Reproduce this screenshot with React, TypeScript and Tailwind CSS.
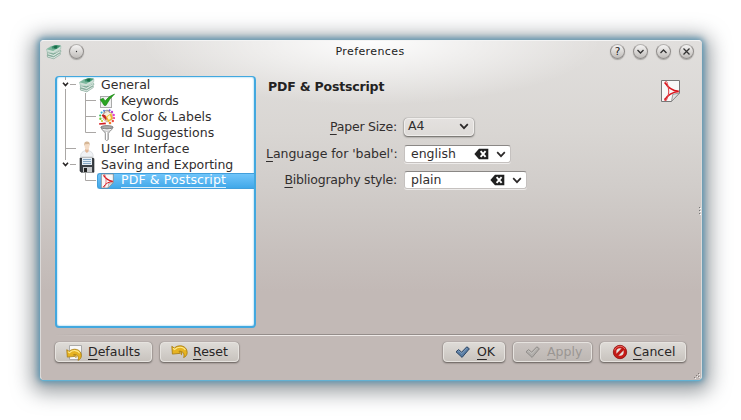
import React from "react";

const svgBase = "block shrink-0";

function BooksIcon() {
  return (
    <svg className={svgBase} width="16" height="16" viewBox="0 0 16 16">
      <path d="M1 10.8 L7 8.5 L14.6 9.6 L8 14.8 L1.5 13.2z" fill="#86ab9b" />
      <path d="M1.2 11.3 L7.5 13 L14.2 9 L14.3 10.6 L7.8 14.8 L1.5 13z" fill="#e3ebe7" stroke="#7da593" strokeWidth=".6" />
      <path d="M1.3 8.6 L7.4 10.4 L14.7 6.4 L14.8 8 L7.8 12.4 L1.5 10.6z" fill="#e3ece7" stroke="#6f9f8a" strokeWidth=".6" />
      <path d="M.5 5.2 L5 2.4 L15 2.2 L14.6 5.2 L7.4 9.6 L1 7.8z" fill="#cfe0d7" stroke="#7fae99" strokeWidth=".4" />
      <path d="M.5 5.2 L5 2.4 L15 2.2 L7.2 7z" fill="#7db89e" />
      <path d="M5.6 2.6 L9 1 L14.9 1.6 L10.5 5 L6 4.6z" fill="#3f9470" />
      <path d="M7.2 2.6 L11.4 1.4 L10.6 4.4 L8.7 4.6z" fill="#1a6c4a" />
    </svg>
  );
}

function KeywordsIcon() {
  return (
    <svg className={svgBase} width="16" height="16" viewBox="0 0 16 16">
      <rect x="1.5" y="3.5" width="11" height="11" fill="#f0f0f0" stroke="#aaaaaa" />
      <path d="M1.2 6.6 L4.2 5.2 L6.2 8 Q9.5 3 15.6 1 Q10.5 5.5 7 12.4 L5.2 12.4z" fill="#2ba322" stroke="#178711" strokeWidth=".6" />
    </svg>
  );
}

function ColorIcon() {
  return (
    <svg className={svgBase} width="16" height="16" viewBox="0 0 16 16">
      <g>
        <circle cx="5" cy="1.8" r="1" fill="#4f7de8" />
        <circle cx="10.6" cy="1.2" r="1" fill="#7a4fe0" />
        <circle cx="13" cy="3" r="1.2" fill="#b93ddb" />
        <circle cx="14.7" cy="6" r="1.2" fill="#e83ad4" />
        <circle cx="15" cy="9" r="1.1" fill="#ee3d8e" />
        <circle cx="13.8" cy="12" r="1.2" fill="#ef4b3c" />
        <circle cx="11" cy="14" r="1.3" fill="#ef7b2c" />
        <circle cx="2.6" cy="3.6" r="1.1" fill="#32b6d4" />
        <circle cx="1.2" cy="6.5" r="1.1" fill="#38ba5d" />
        <circle cx="1.4" cy="9.7" r="1.2" fill="#6ccd32" />
        <circle cx="3" cy="12" r="1.1" fill="#c6cf28" />
      </g>
      <path d="M4.4 4.6 L8.5 2.2 L13 4.2 L13.5 10 L8 13 L4 10z" fill="#f5efe1" stroke="#a46b55" strokeWidth=".5" />
      <path d="M5 4.5 C5 .6 10 .2 10.8 3.6" fill="none" stroke="#777" strokeWidth="1" />
      <path d="M6.6 8 L12.2 4.2 L13.8 9.4 L9.2 13.2z" fill="#efb92b" />
      <path d="M3.6 5.2 L6.4 6.2 L7.6 9.4 L7.4 11.8 L5 9 L2.8 6.8z" fill="#c62720" />
      <path d="M8.2 8 L10.8 6 L12 9.2 L9.8 11z" fill="#fff4d0" />
      <path d="M0 14.3 L6.6 13.6 L7 15.2 L.3 15.7z" fill="#d52124" />
    </svg>
  );
}

function FunnelIcon() {
  return (
    <svg className={svgBase} width="16" height="16" viewBox="0 0 16 16">
      <path d="M2 2.2 C2.6 5.4 6 6.6 6.3 8.5 V14.6 Q7.8 16.2 9.3 14.6 V8.5 C9.8 6.6 13.2 5.4 13.8 2.2z" fill="#cdcdcd" stroke="#808080" strokeWidth=".8" />
      <path d="M7.6 7 V15" stroke="#fff" strokeWidth="1.2" />
      <ellipse cx="8" cy="2.2" rx="6.1" ry="1.6" fill="#a9a9a9" stroke="#737373" strokeWidth=".8" />
      <path d="M4 4.4 Q8 6 12 4.4" stroke="#f5f5f5" strokeWidth="1" fill="none" />
    </svg>
  );
}

function UserIcon() {
  return (
    <svg className={svgBase} width="16" height="16" viewBox="0 0 16 16">
      <path d="M1.6 15.6 C1.6 11.6 4 10.4 6 9.6 H9.6 C12 10.4 14.2 11.6 14.2 15.6z" fill="#f0f2f5" stroke="#d0d4d8" strokeWidth=".7" />
      <path d="M6.2 8 H9.6 V10.4 L7.9 12 L6.2 10.4z" fill="#e2b797" />
      <ellipse cx="8" cy="5" rx="2.4" ry="3.7" fill="#f4dcc6" />
      <path d="M5.4 5 C4.8 1.4 6.2 .6 8 .6 C10 .6 11.2 1.8 10.6 5 L10 3 L6.2 3.2z" fill="#d6b694" />
    </svg>
  );
}

function FloppyIcon() {
  return (
    <svg className={svgBase} width="16" height="16" viewBox="0 0 16 16">
      <path d="M1 1 H14.4 L15 2 V15.2 H2 L1 14z" fill="#3b4046" stroke="#202327" strokeWidth=".6" />
      <rect x="3" y="1" width="10" height="7" fill="#e6eef5" />
      <path d="M4 2.5 H12 M4 4.5 H12 M4 6.5 H12" stroke="#86a8c5" strokeWidth="1" />
      <rect x="4" y="10" width="9" height="5.3" fill="#c7cacd" />
      <rect x="5" y="11" width="3" height="4" fill="#222" />
    </svg>
  );
}

function PdfIcon({ size = 16 }: { size?: number }) {
  return (
    <svg className={svgBase} width={size} height={size} viewBox="0 0 24 24">
      <path d="M3.5 1.5 H21.5 V14 L13.5 22.5 H3.5z" fill="#f8f8f8" stroke="#777" />
      <path d="M21.5 14 L14.8 15.3 L13.5 22.5z" fill="#e2e2e2" stroke="#858585" strokeWidth=".8" />
      <path d="M7.6 5.4 C6.4 4.4 6.6 2.6 8 2.6 C9.6 2.6 9.4 4 9.2 5" fill="none" stroke="#e0484e" strokeWidth=".9" />
      <path d="M7 3.6 C9.6 8 14 11.6 20.6 12.4" fill="none" stroke="#d9141c" strokeWidth="1.7" />
      <path d="M20.6 12.6 C15 13.2 10 15.4 6.6 21" fill="none" stroke="#d9141c" strokeWidth="1.5" />
      <path d="M9.4 5 C11.4 10.6 10.8 16.6 8.6 20.6 C7.6 22 5.8 21.4 6.8 19.6" fill="none" stroke="#e0484e" strokeWidth="1.1" />
    </svg>
  );
}

function UndoIcon({ page = false }: { page?: boolean }) {
  return (
    <svg className={svgBase} width="17" height="17" viewBox="0 0 17 17">
      {page && <path d="M3.5 1.5 H15.5 V12 L12 15.5 H3.5z" fill="#f8f8f8" stroke="#aaa" />}
      <g transform={page ? "translate(0 4) scale(.95)" : "translate(0 .5)"}>
        <path
          d="M.8 1.8 L3.4 3.6 C7 -.4 16 .6 16.2 8 C16.2 10.6 14.6 12.4 12.6 13 C13.8 10 12.4 6.6 8.6 6.8 L8 7 L9.6 8.8 L1.4 9.6z"
          fill="#e6b322"
          stroke="#a5780c"
          strokeWidth=".8"
          strokeLinejoin="round"
        />
        <path d="M2 3.8 L3.6 5 C7 1.8 12.5 2 14.4 5.6" fill="none" stroke="#ffe98a" strokeWidth="1.1" />
        <path d="M8.2 7 C10 6.4 11.4 8.6 10.2 10.4" fill="none" stroke="#b98a12" strokeWidth="1.2" />
      </g>
    </svg>
  );
}

function CheckIcon({ muted = false }: { muted?: boolean }) {
  return (
    <svg className={svgBase} width="16" height="16" viewBox="0 0 16 16">
      <path
        d="M1 7.8 L3.6 5.6 L6.6 8.2 L11.8 2.8 L14.4 4.8 L7.1 13.4z"
        fill={muted ? "#b1aeab" : "#5a7da3"}
        stroke={muted ? "#8f8c89" : "#2b4463"}
        strokeWidth="1"
        strokeLinejoin="round"
      />
      <path d="M2.5 7.7 L3.8 6.8 L6.8 9.6 L12 4.2" fill="none" stroke={muted ? "#c7c5c1" : "#86a5c4"} strokeWidth=".9" />
    </svg>
  );
}

function CancelIcon() {
  return (
    <svg className={svgBase} width="16" height="16" viewBox="0 0 16 16">
      <circle cx="8" cy="8" r="6.7" fill="#c51b17" stroke="#8d0e0b" strokeWidth=".8" />
      <circle cx="8" cy="8" r="3.7" fill="#e6e1dd" />
      <path d="M4.6 11.4 L11.4 4.6" stroke="#bd1713" strokeWidth="2.8" />
      <path d="M2.6 6.3 C3.8 2 10.5 .6 13 5" fill="none" stroke="#e66a64" strokeWidth="1" />
    </svg>
  );
}

function ClearIcon() {
  return (
    <svg className={svgBase} width="15" height="12" viewBox="0 0 15 12">
      <path d="M.4 6 L5 .8 H14.3 V11.2 H5z" fill="#202020" />
      <path d="M6.6 3.2 L11.6 8.8 M11.6 3.2 L6.6 8.8" stroke="#fff" strokeWidth="1.9" />
    </svg>
  );
}

function Chevron() {
  return (
    <svg className={svgBase} width="10" height="7" viewBox="0 0 10 7">
      <path d="M1.2 1.2 L5 5.2 L8.8 1.2" fill="none" stroke="#2b2828" strokeWidth="1.7" />
    </svg>
  );
}

function TitleButton({ kind }: { kind: "dot" | "help" | "down" | "up" | "close" }) {
  return (
    <button className="flex h-[15px] w-[15px] shrink-0 items-center justify-center rounded-full border border-[#908d8b] border-t-[#b4b2b0] bg-linear-to-b from-[#f5f4f3] to-[#c0bdba] shadow-[0_1px_1px_#77747188]">
      {kind === "help" ? (
        <span className="text-[10.5px] leading-none text-[#222]">?</span>
      ) : (
        <svg width="9" height="9" viewBox="0 0 9 9">
          {kind === "dot" && <circle cx="4.5" cy="4.5" r=".65" fill="#333" />}
          {kind === "down" && <path d="M1.5 3 L4.5 6 L7.5 3" fill="none" stroke="#333" strokeWidth="1.3" />}
          {kind === "up" && <path d="M1.5 6 L4.5 3 L7.5 6" fill="none" stroke="#333" strokeWidth="1.3" />}
          {kind === "close" && <path d="M1.5 1.5 L7.5 7.5 M7.5 1.5 L1.5 7.5" stroke="#333" strokeWidth="1.3" />}
        </svg>
      )}
    </button>
  );
}

function Mnemonic({ text }: { text: string }) {
  return (
    <span>
      <span className="underline decoration-1 underline-offset-[3px]">{text[0]}</span>
      {text.slice(1)}
    </span>
  );
}

function TreeLines({ kind }: { kind: "first" | "child" | "lastChild" | "item" | "open" | "tail" }) {
  const nested = kind === "child" || kind === "lastChild" || kind === "tail";
  return (
    <svg className={svgBase} width={nested ? 40 : 20} height="16" viewBox={nested ? "0 0 40 16" : "0 0 20 16"}>
      <g stroke="#aaa7a5" fill="none">
        {kind === "first" && <path d="M8.5 0 V3 M8.5 12 V16 M13 7.5 H19" />}
        {kind === "child" && <path d="M8.5 0 V16 M28.5 0 V16 M28.5 7.5 H39" />}
        {kind === "lastChild" && <path d="M8.5 0 V16 M28.5 0 V7.5 H39" />}
        {kind === "item" && <path d="M8.5 0 V16 M8.5 7.5 H19" />}
        {kind === "open" && <path d="M8.5 0 V3 M13 7.5 H19" />}
        {kind === "tail" && <path d="M28.5 0 V7.5 H39" />}
      </g>
      {(kind === "first" || kind === "open") && <path d="M6 5.7 L8.5 8.5 L11 5.7" fill="none" stroke="#292626" strokeWidth="1.6" />}
    </svg>
  );
}

function TreeRow({
  lines,
  icon,
  label,
  tracking = "",
}: {
  lines: "first" | "child" | "lastChild" | "item" | "open";
  icon: React.ReactNode;
  label: string;
  tracking?: string;
}) {
  return (
    <div className="flex h-4 shrink-0 items-center">
      <TreeLines kind={lines} />
      <span className="ml-[2px]">{icon}</span>
      <span className={`ml-[6px] whitespace-nowrap ${tracking}`}>{label}</span>
    </div>
  );
}

function DialogButton({ className, icon, label, muted = false }: { className: string; icon: React.ReactNode; label: string; muted?: boolean }) {
  return (
    <button
      className={`flex h-5 items-center rounded-[4px] border border-[#e6e3df] bg-linear-to-b shadow-[0_1px_2px_#625c58,0_0_1px_#777] ${
        muted ? "from-[#cbc5c2] to-[#bdb7b3] text-[#9a9693]" : "from-[#dedbd7] to-[#c8c3be] text-[#292626]"
      } ${className}`}
    >
      {icon}
      <Mnemonic text={label} />
    </button>
  );
}

function EditCombo({ className, value }: { className: string; value: string }) {
  return (
    <div className={`flex h-[18px] items-center rounded-[3px] border border-[#c5c1bf] border-t-[#8a8785] bg-white pr-[4px] pl-[6px] shadow-[0_1px_0_#eeeceb] ${className}`}>
      <span className="grow">{value}</span>
      <ClearIcon />
      <span className="ml-[7px]">
        <Chevron />
      </span>
    </div>
  );
}

export default function App() {
  return (
    <div className="h-[420px] w-[741px] overflow-hidden bg-white pt-10 pl-10 font-['DejaVu_Sans',sans-serif] text-[12.5px] leading-4 text-[#312e2e]">
      <div className="relative flex h-[340px] w-[662px] flex-col rounded-[4px] border border-[#dcdad9] border-t-[#f4f4f4] border-b-[#c2b9b6] bg-[radial-gradient(ellipse_230px_64px_at_50%_0,#fffffff0,#ffffff00),linear-gradient(to_bottom,#e1dfdd_0,#d9d6d3_90px,#d1cdca_145px,#c7c0bd_210px,#c2b9b6_250px,#c2b9b6_100%)] shadow-[0_1px_1px_#62b4d6,0_0_6px_2px_#5a93b0,0_4px_20px_8px_#60676ea8]">
        <header className="flex h-[21px] items-center pr-[7px] pl-[5px]">
          <BooksIcon />
          <span className="ml-[7px]">
            <TitleButton kind="dot" />
          </span>
          <h1 className="grow pl-[46px] text-center text-[11px] tracking-[0.4px] text-[#222]">Preferences</h1>
          <div className="flex gap-2">
            <TitleButton kind="help" />
            <TitleButton kind="down" />
            <TitleButton kind="up" />
            <TitleButton kind="close" />
          </div>
        </header>

        <main className="mt-[14px] flex h-[252px] pl-[14px]">
          <nav className="flex w-[201px] shrink-0 flex-col overflow-hidden rounded-[4px] border-2 border-t border-[#42a8df] bg-white shadow-[inset_0_0_2px_#62bdea]">
            <TreeRow lines="first" icon={<BooksIcon />} label="General" />
            <TreeRow lines="child" icon={<KeywordsIcon />} label="Keywords" tracking="tracking-[-0.3px]" />
            <TreeRow lines="child" icon={<ColorIcon />} label="Color & Labels" />
            <TreeRow lines="lastChild" icon={<FunnelIcon />} label="Id Suggestions" tracking="tracking-[0.1px]" />
            <TreeRow lines="item" icon={<UserIcon />} label="User Interface" />
            <TreeRow lines="open" icon={<FloppyIcon />} label="Saving and Exporting" tracking="tracking-[-0.1px]" />
            <div className="flex h-4 shrink-0 items-center">
              <TreeLines kind="tail" />
              <div className="flex h-4 grow items-center rounded-l-[3px] border border-r-0 border-[#429fdb] bg-linear-to-b from-[#70c5fa] to-[#40a8e9] pl-[1px] text-white">
                <PdfIcon />
                <span className="ml-[6px] h-[14px] border-b border-white/80 leading-[12px] tracking-[0.12px] whitespace-nowrap">PDF &amp; Postscript</span>
              </div>
            </div>
          </nav>

          <section className="grow pl-[10px]">
            <div className="flex h-[41px] items-start justify-between pr-[19px] pl-[2px]">
              <h2 className="mt-[3px] text-[12.5px] font-bold tracking-[-0.18px] text-[#242222]">PDF &amp; Postscript</h2>
              <span className="mt-[3px]">
                <PdfIcon size={24} />
              </span>
            </div>
            <div className="flex flex-col">
              <div className="flex h-[19px] items-center">
                <span className="w-[131px] text-right tracking-[-0.2px]">
                  <Mnemonic text="Paper Size:" />
                </span>
                <div className="ml-[7px] flex h-[18px] w-[70px] items-center justify-between rounded-[4px] border border-[#f0eeec] bg-linear-to-b from-[#e4e1df] to-[#dedbd8] pr-[4px] pl-[3px] shadow-[0_1px_2px_#625f5c,0_0_1px_#777]">
                  <span className="-mt-px">A4</span>
                  <Chevron />
                </div>
              </div>
              <div className="mt-[9px] flex h-[18px] items-center">
                <span className="w-[131px] text-right tracking-[-0.05px] whitespace-nowrap">
                  <Mnemonic text="Language for 'babel':" />
                </span>
                <EditCombo className="ml-[7px] w-[107px]" value="english" />
              </div>
              <div className="mt-2 flex h-[18px] items-center">
                <span className="w-[131px] text-right tracking-[-0.22px]">
                  <Mnemonic text="Bibliography style:" />
                </span>
                <EditCombo className="ml-[7px] w-[123px]" value="plain" />
              </div>
            </div>
          </section>
        </main>

        <div className="mx-[14px] mt-[6px] h-[2px] shrink-0 bg-[linear-gradient(to_right,transparent,#948d8a_20%,#948d8a_80%,transparent),linear-gradient(to_right,transparent,#eeeae8_20%,#eeeae8_80%,transparent)] bg-[length:100%_1px,100%_1px] bg-[position:0_0,0_1px] bg-no-repeat" />

        <footer className="mt-[6px] flex h-[19px] pr-[15px] pl-[14px]">
          <DialogButton className="w-[97px] gap-[5px] pl-[10px]" icon={<UndoIcon page />} label="Defaults" />
          <DialogButton className="ml-2 w-[79px] gap-[5px] pl-[10px]" icon={<UndoIcon />} label="Reset" />
          <span className="grow" />
          <DialogButton className="w-[62px] gap-[6px] pl-[11px]" icon={<CheckIcon />} label="OK" />
          <DialogButton className="ml-2 w-[79px] gap-[6px] pl-[11px]" icon={<CheckIcon muted />} label="Apply" muted />
          <DialogButton className="ml-2 w-[86px] gap-[5px] pl-[11px]" icon={<CancelIcon />} label="Cancel" />
        </footer>

        <svg className="absolute right-0 bottom-0" width="8" height="8" viewBox="0 0 8 8">
          <path d="M5 2h1v1h-1z M3 4h1v1h-1z M1 6h1v1h-1z M5 5h1v1h-1z" fill="#817b78" />
          <path d="M6 3h1v1h-1z M4 5h1v1h-1z M2 7h1v1h-1z M6 6h1v1h-1z" fill="#f2efed" />
        </svg>
        <svg className="absolute top-[166px] -right-px" width="3" height="9" viewBox="0 0 3 9">
          <path d="M0 0h1v1h-1z M0 3h1v1h-1z M0 6h1v1h-1z" fill="#777" />
          <path d="M1 1h1v1h-1z M1 4h1v1h-1z M1 7h1v1h-1z" fill="#fff" />
        </svg>
      </div>
    </div>
  );
}
